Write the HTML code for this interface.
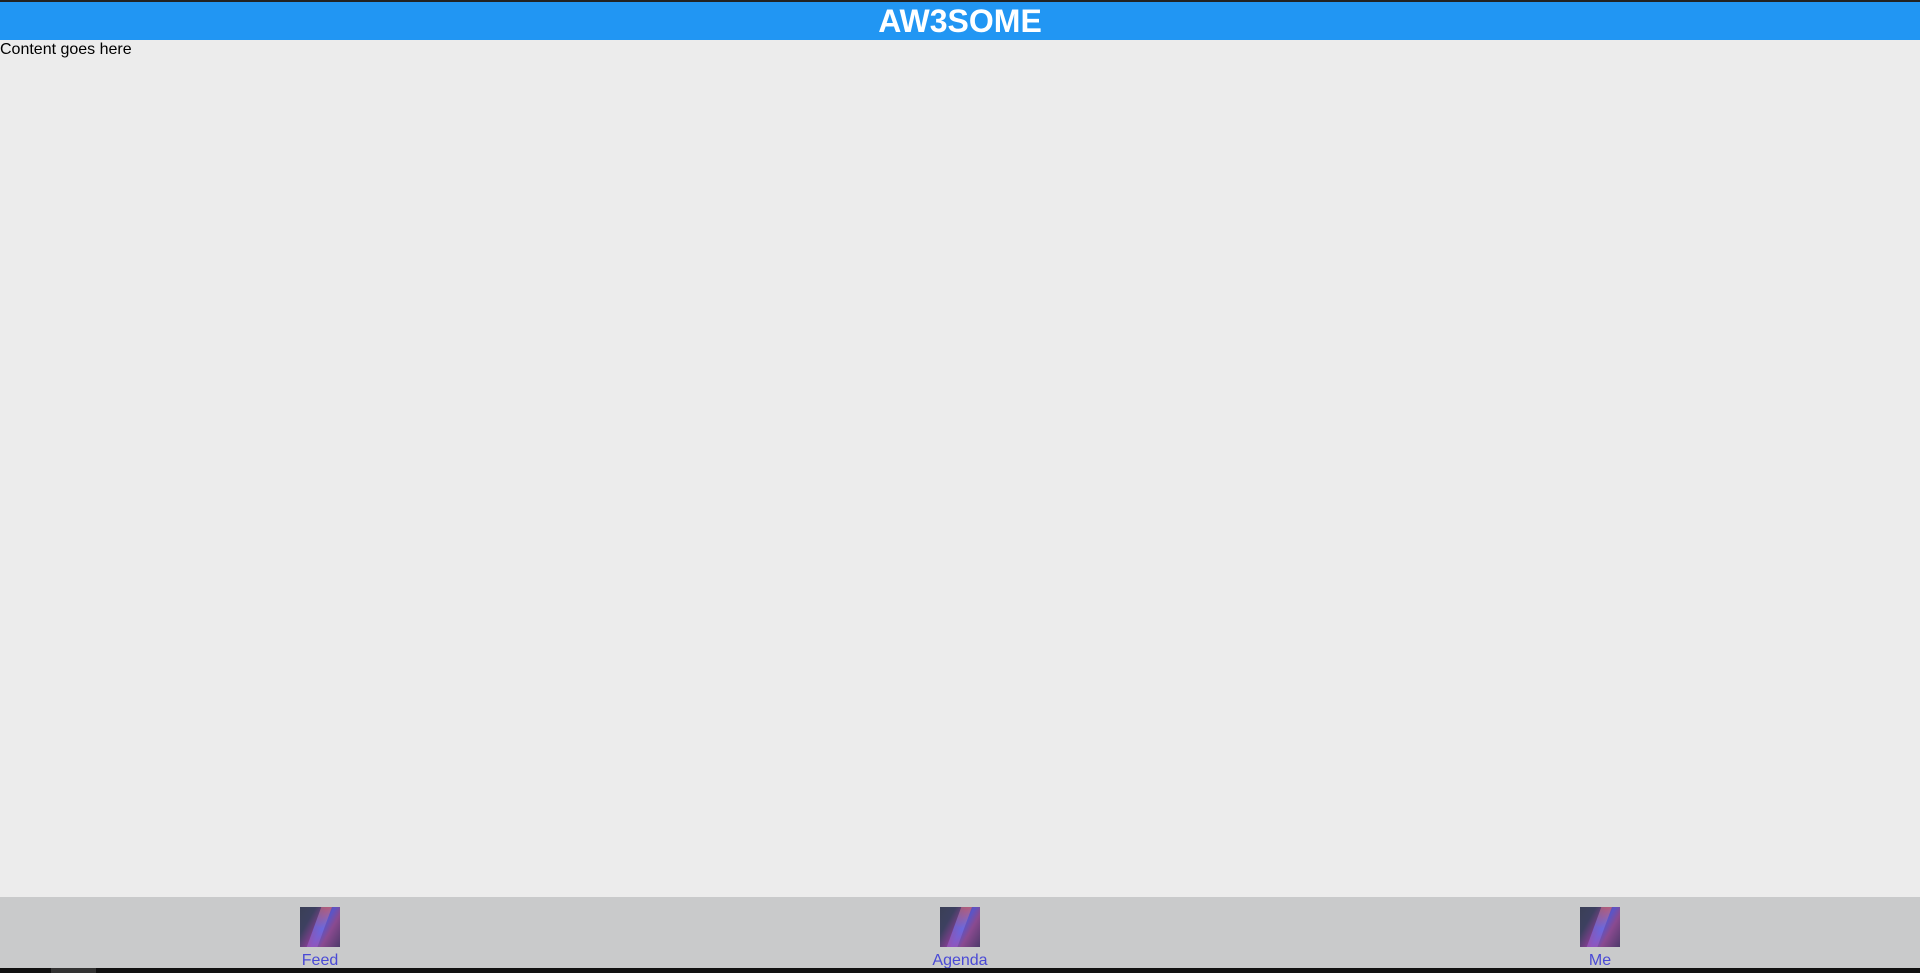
<!DOCTYPE html>
<html><head><style>
body{margin:0;width:1920px;height:973px;background:#ececec;font-family:"Liberation Sans",Arial,sans-serif;position:relative;overflow:hidden}
.top{position:absolute;top:0;left:0;width:1920px;height:2px;background:#222}
.hdr{position:absolute;top:2px;left:0;width:1920px;height:38px;background:#2196f3;color:#fff;font-weight:bold;font-size:32px;text-align:center;line-height:38px}
.c{position:absolute;top:41px;left:0;font-size:16px;line-height:18px;color:#000}
.ft{position:absolute;top:897px;left:0;width:1920px;height:71px;background:#c9cacb;display:flex}
.it{width:640px;text-align:center;color:#4a4ad6;font-size:16px}
.ic{width:40px;height:40px;margin:10px auto 5px;background:linear-gradient(120deg,#3a3f55 0%,#3d4060 25%,#7a3f8a 45%,#5a55c8 55%,#8a4a90 70%,#4e3a6a 100%);position:relative;overflow:hidden}
.ic:after{content:"";position:absolute;left:14px;top:-4px;width:10px;height:50px;background:linear-gradient(#d36a6a,#7070e8,#b050b0);transform:rotate(20deg);opacity:.7}
.lb{line-height:18px}
.bot{position:absolute;top:968px;left:0;width:1920px;height:5px;background:#111}
.sb{position:absolute;top:968px;left:51px;width:45px;height:5px;background:#333}
</style></head><body>
<div class="top"></div>
<div class="hdr">AW3SOME</div>
<div class="c">Content goes here</div>
<div class="ft">
<div class="it"><div class="ic"></div><div class="lb">Feed</div></div>
<div class="it"><div class="ic"></div><div class="lb">Agenda</div></div>
<div class="it"><div class="ic"></div><div class="lb">Me</div></div>
</div>
<div class="bot"></div><div class="sb"></div>
</body></html>
